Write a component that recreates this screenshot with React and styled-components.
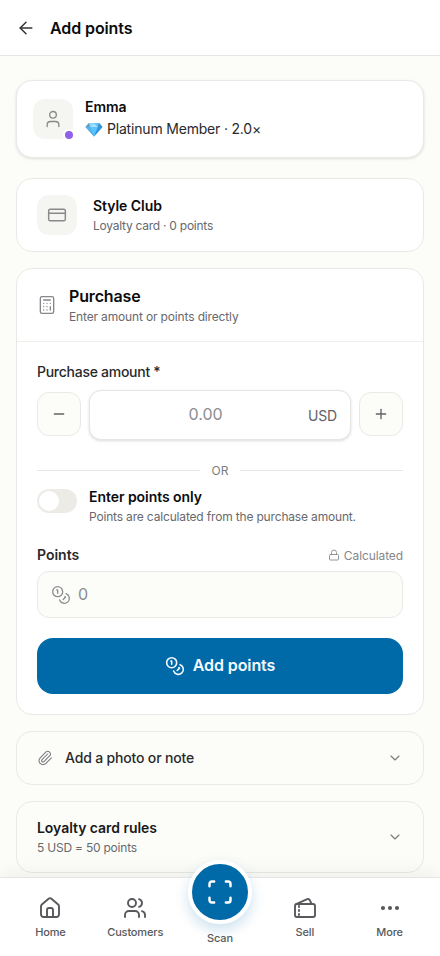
import React from 'react';
import styled, { createGlobalStyle } from 'styled-components';
import {
    ArrowLeft,
    Calculator,
    ChevronDown,
    Coins,
    CreditCard,
    Ellipsis,
    Lock,
    Minus,
    Paperclip,
    Plus,
    Scan,
    User,
    Users,
} from 'lucide-react';

const GlobalStyle = createGlobalStyle`
    * {
        box-sizing: border-box;
    }
    body {
        margin: 0;
        background-color: #fcfdf9;
        color: #0c0c0d;
        font-family: Inter, "Liberation Sans", sans-serif;
        overflow: hidden;
    }
    svg {
        display: block;
        flex-shrink: 0;
    }
    button, input {
        font-family: inherit;
    }
`

function Diamond() {
    return (
        <svg width="18" height="15" viewBox="0 0 18 15">
            <path d="M4 1h10l3.500 4L9 14.500.5 5z" fill="#42a9ed" />
            <path d="M4 1 .5 5H5z" fill="#5f9fbd" />
            <path d="M4 1h5L5 5z" fill="#8ad8fb" />
            <path d="M9 1 5 5h8z" fill="#a5e3fd" />
            <path d="M9 1h5l-1 4z" fill="#64c3f6" />
            <path d="M14 1l3.500 4H13z" fill="#3c8fd0" />
            <path d="M.5 5H5l4 9.500z" fill="#5ab0e6" />
            <path d="M5 5h8L9 14.500z" fill="#58c4fb" />
            <path d="M13 5h4.500L9 14.500z" fill="#3594dc" />
        </svg>
    );
}

function HomeIcon() {
    return (
        <svg width="24" height="24" viewBox="0 0 24 24" fill="none" stroke="currentColor" strokeWidth="1.9" strokeLinecap="round" strokeLinejoin="round">
            <path d="M3 10.500a3 3 0 0 1 1.100-2.300l6.500-5.500a2.200 2.200 0 0 1 2.800 0l6.500 5.500A3 3 0 0 1 21 10.500V18.500a2.500 2.500 0 0 1-2.500 2.500h-13A2.500 2.500 0 0 1 3 18.500z" />
            <path d="M9 21v-7a2 2 0 0 1 2-2h2a2 2 0 0 1 2 2v7" />
        </svg>
    );
}

function SellIcon() {
    return (
        <svg width="24" height="24" viewBox="0 0 24 24" fill="none" stroke="currentColor" strokeWidth="1.9" strokeLinecap="round" strokeLinejoin="round">
            <path d="m3.173 8.180 11-5a2 2 0 0 1 2.647.993L18.560 8" />
            <path d="M6 10v1M6 14v1M6 18v1" />
            <rect x="2" y="8" width="20" height="13" rx="2" />
        </svg>
    );
}

function App() {
    return (
        <Page>
            <GlobalStyle />
            <Header>
                <ArrowLeft size={20} strokeWidth={1.75} color="#333" />
                <HeaderTitle>Add points</HeaderTitle>
            </Header>
            <Main>
                <MemberCard>
                    <IconTile>
                        <User size={20} strokeWidth={1.6} />
                        <StatusDot />
                    </IconTile>
                    <MemberText>
                        <ItemTitle>Emma</ItemTitle>
                        <MemberLevel>
                            <Diamond />
                            <span>Platinum Member · 2.0×</span>
                        </MemberLevel>
                    </MemberText>
                </MemberCard>

                <ClubCard>
                    <IconTile>
                        <CreditCard size={20} strokeWidth={1.75} />
                    </IconTile>
                    <TextBlock>
                        <ItemTitle>Style Club</ItemTitle>
                        <SubText $spacing="-0.25px">Loyalty card · 0 points</SubText>
                    </TextBlock>
                </ClubCard>

                <PurchaseCard>
                    <PurchaseHead>
                        <Calculator size={20} strokeWidth={1.6} />
                        <TextBlock>
                            <PurchaseTitle>Purchase</PurchaseTitle>
                            <SubText>Enter amount or points directly</SubText>
                        </TextBlock>
                    </PurchaseHead>
                    <PurchaseBody>
                        <Label>Purchase amount *</Label>
                        <AmountRow>
                            <StepButton aria-label="Decrease"><Minus size={16} /></StepButton>
                            <AmountBox>
                                <AmountInput placeholder="0.00" />
                                <Currency>USD</Currency>
                            </AmountBox>
                            <StepButton aria-label="Increase"><Plus size={16} /></StepButton>
                        </AmountRow>
                        <Divider>OR</Divider>
                        <ToggleRow>
                            <Toggle role="switch" aria-checked="false"><Knob /></Toggle>
                            <div>
                                <ItemTitle>Enter points only</ItemTitle>
                                <SubText $spacing="-0.17px">Points are calculated from the purchase amount.</SubText>
                            </div>
                        </ToggleRow>
                        <PointsHead>
                            <PointsLabel>Points</PointsLabel>
                            <Calculated><Lock size={12} strokeWidth={1.75} />Calculated</Calculated>
                        </PointsHead>
                        <PointsBox>
                            <Coins size={20} strokeWidth={1.6} />
                            <span>0</span>
                        </PointsBox>
                        <SubmitButton>
                            <Coins size={20} strokeWidth={1.9} />
                            <span>Add points</span>
                        </SubmitButton>
                    </PurchaseBody>
                </PurchaseCard>

                <FoldCard $height="54px">
                    <Paperclip size={16} strokeWidth={1.6} color="#7a7c80" />
                    <FoldTitle>Add a photo or note</FoldTitle>
                    <ChevronDown size={16} strokeWidth={1.75} color="#7a7c80" />
                </FoldCard>
                <FoldCard $height="72px">
                    <FoldText>
                        <RulesTitle>Loyalty card rules</RulesTitle>
                        <SubText $spacing="-0.22px">5 USD = 50 points</SubText>
                    </FoldText>
                    <ChevronDown size={16} strokeWidth={1.75} color="#7a7c80" />
                </FoldCard>
            </Main>

            <BottomNav>
                <NavItem><HomeIcon />Home</NavItem>
                <NavItem><Users size={24} strokeWidth={1.9} />Customers</NavItem>
                <ScanItem>
                    <ScanCircle><Scan size={28} strokeWidth={2.1} /></ScanCircle>
                    Scan
                </ScanItem>
                <NavItem><SellIcon />Sell</NavItem>
                <NavItem><Ellipsis size={24} strokeWidth={2.1} />More</NavItem>
            </BottomNav>
        </Page>
    );
}

const Page = styled.div`
    display: flex;
    flex-direction: column;
    width: 100%;
    height: 956px;
    overflow: hidden;
`
const Header = styled.header`
    display: flex;
    align-items: center;
    gap: 14px;
    flex-shrink: 0;
    height: 56px;
    padding: 0 16px;
    background-color: #fff;
    border-bottom: 1px solid #e5e6e4;
`
const HeaderTitle = styled.h1`
    margin: 0;
    font-size: 16px;
    font-weight: 600;
    line-height: 24px;
    letter-spacing: -0.1px;
`
const Main = styled.main`
    display: flex;
    flex-direction: column;
    gap: 16px;
    height: 821px;
    flex-shrink: 0;
    padding: 24px 16px 0;
`
const Card = styled.section`
    flex-shrink: 0;
    background-color: #fff;
    border: 1px solid #e9eae5;
    border-radius: 16px;
`
const MemberCard = styled(Card)`
    display: flex;
    align-items: center;
    gap: 12px;
    height: 78px;
    margin-bottom: 4px;
    padding: 0 16px;
    box-shadow: 0 1px 3px rgba(0, 0, 0, 0.12);
`
const ClubCard = styled(Card)`
    display: flex;
    align-items: center;
    gap: 16px;
    height: 74px;
    padding: 0 20px;
`
const IconTile = styled.div`
    position: relative;
    display: flex;
    align-items: center;
    justify-content: center;
    width: 40px;
    height: 40px;
    border-radius: 12px;
    background-color: #f5f5f2;
    color: #88898a;
`
const StatusDot = styled.span`
    position: absolute;
    right: -2px;
    bottom: -2px;
    width: 12px;
    height: 12px;
    border: 2px solid #fff;
    border-radius: 50%;
    background-color: #8f60e8;
`
const MemberText = styled.div`
    display: flex;
    flex-direction: column;
    gap: 2px;
    padding-bottom: 2px;
`
const TextBlock = styled.div`
    padding-top: 2px;
`
const ItemTitle = styled.div`
    font-size: 14px;
    font-weight: 600;
    line-height: 20px;
    letter-spacing: -0.05px;
`
const MemberLevel = styled.div`
    display: flex;
    align-items: center;
    gap: 4px;
    font-size: 14px;
    line-height: 20px;
    color: #29292b;
    letter-spacing: -0.19px;
`
const SubText = styled.div`
    font-size: 12px;
    line-height: 20px;
    color: #67696d;
    letter-spacing: ${(props) => props.$spacing || '-0.15px'};
`
const PurchaseCard = styled(Card)`
    height: 447px;
`
const PurchaseHead = styled.div`
    display: flex;
    align-items: center;
    gap: 12px;
    height: 73px;
    padding: 0 20px;
    border-bottom: 1px solid #eeefeb;
    color: #85878a;
`
const PurchaseTitle = styled.h2`
    margin: 0;
    font-size: 16px;
    font-weight: 600;
    line-height: 21px;
    color: #0c0c0d;
    letter-spacing: -0.15px;
`
const PurchaseBody = styled.div`
    display: flex;
    flex-direction: column;
    padding: 20px;
`
const Label = styled.label`
    font-size: 14px;
    font-weight: 500;
    line-height: 20px;
    color: #29292b;
    letter-spacing: -0.27px;
`
const AmountRow = styled.div`
    display: flex;
    align-items: center;
    gap: 8px;
    margin-top: 8px;
`
const StepButton = styled.button`
    display: flex;
    align-items: center;
    justify-content: center;
    flex-shrink: 0;
    width: 44px;
    height: 44px;
    margin-bottom: 2px;
    padding: 0;
    border: 1px solid #e9eae5;
    border-radius: 12px;
    background-color: #fcfdf9;
    color: #606266;
`
const AmountBox = styled.div`
    display: flex;
    align-items: center;
    flex: 1;
    min-width: 0;
    height: 50px;
    padding: 0 13px;
    border: 1px solid #e5e6e2;
    border-radius: 12px;
    background-color: #fff;
    box-shadow: 0 1px 3px rgba(0, 0, 0, 0.14);
`
const AmountInput = styled.input`
    flex: 1;
    width: 0;
    min-width: 0;
    padding: 0 0 2px;
    border: 0;
    outline: 0;
    background: transparent;
    font-size: 16px;
    text-align: center;
    &::placeholder {
        color: #8b8d91;
    }
`
const Currency = styled.span`
    font-size: 14px;
    color: #606266;
    letter-spacing: -0.2px;
`
const Divider = styled.div`
    display: flex;
    align-items: center;
    gap: 12px;
    height: 16px;
    margin-top: 22px;
    font-size: 12px;
    color: #7b7d81;
    &::before, &::after {
        content: "";
        flex: 1;
        height: 1px;
        background-color: #e6e7e3;
    }
`
const ToggleRow = styled.div`
    display: flex;
    gap: 12px;
    margin-top: 9px;
`
const Toggle = styled.button`
    display: flex;
    align-items: center;
    flex-shrink: 0;
    width: 40px;
    height: 24px;
    margin-top: 2px;
    padding: 0 2px;
    border: 0;
    border-radius: 12px;
    background-color: #ecebe6;
`
const Knob = styled.span`
    width: 20px;
    height: 20px;
    border-radius: 50%;
    background-color: #fff;
`
const PointsHead = styled.div`
    display: flex;
    align-items: center;
    justify-content: space-between;
    height: 20px;
    margin-top: 18px;
`
const PointsLabel = styled(Label)`
    font-weight: 600;
    letter-spacing: 0;
`
const Calculated = styled.span`
    display: flex;
    align-items: center;
    gap: 4px;
    font-size: 12px;
    color: #85878a;
    letter-spacing: -0.1px;
`
const PointsBox = styled.div`
    display: flex;
    align-items: center;
    gap: 7px;
    height: 47px;
    margin-top: 6px;
    padding: 0 13px;
    border: 1px solid #e9eae5;
    border-radius: 12px;
    background-color: #fcfdf9;
    font-size: 16px;
    color: #8b8d91;
    span {
        padding-bottom: 2px;
    }
`
const SubmitButton = styled.button`
    display: flex;
    align-items: center;
    justify-content: center;
    gap: 8px;
    height: 56px;
    margin-top: 20px;
    border: 0;
    border-radius: 16px;
    background-color: #0069a8;
    color: #f3faff;
    font-size: 16px;
    font-weight: 600;
    letter-spacing: -0.1px;
    span {
        padding-bottom: 2px;
    }
`
const FoldCard = styled(Card)`
    display: flex;
    align-items: center;
    gap: 12px;
    height: ${(props) => props.$height};
    padding: 0 20px;
    background-color: transparent;
`
const FoldTitle = styled.span`
    flex: 1;
    font-size: 14px;
    font-weight: 500;
    line-height: 20px;
    color: #29292b;
    letter-spacing: -0.17px;
`
const FoldText = styled.div`
    flex: 1;
    padding-top: 2px;
`
const RulesTitle = styled(ItemTitle)`
    color: #19191b;
`
const BottomNav = styled.nav`
    position: relative;
    display: grid;
    grid-template-columns: repeat(5, 1fr);
    flex-shrink: 0;
    height: 79px;
    padding: 0 8px;
    border-top: 1px solid #e5e6e4;
    background-color: #fff;
    box-shadow: 0 -4px 20px rgba(0, 0, 0, 0.06);
`
const NavItem = styled.div`
    display: flex;
    flex-direction: column;
    align-items: center;
    gap: 4px;
    padding-top: 18px;
    font-size: 11px;
    font-weight: 500;
    line-height: 16px;
    letter-spacing: -0.15px;
    color: #58595c;
`
const ScanItem = styled(NavItem)`
    gap: 6px;
    padding-top: 0;
`
const ScanCircle = styled.div`
    display: flex;
    align-items: center;
    justify-content: center;
    width: 64px;
    height: 64px;
    margin-top: -18px;
    border: 4px solid #fff;
    border-radius: 50%;
    background-color: #0069a8;
    color: #fff;
    box-shadow: 0 6px 14px rgba(0, 105, 168, 0.2);
`

export default App;
